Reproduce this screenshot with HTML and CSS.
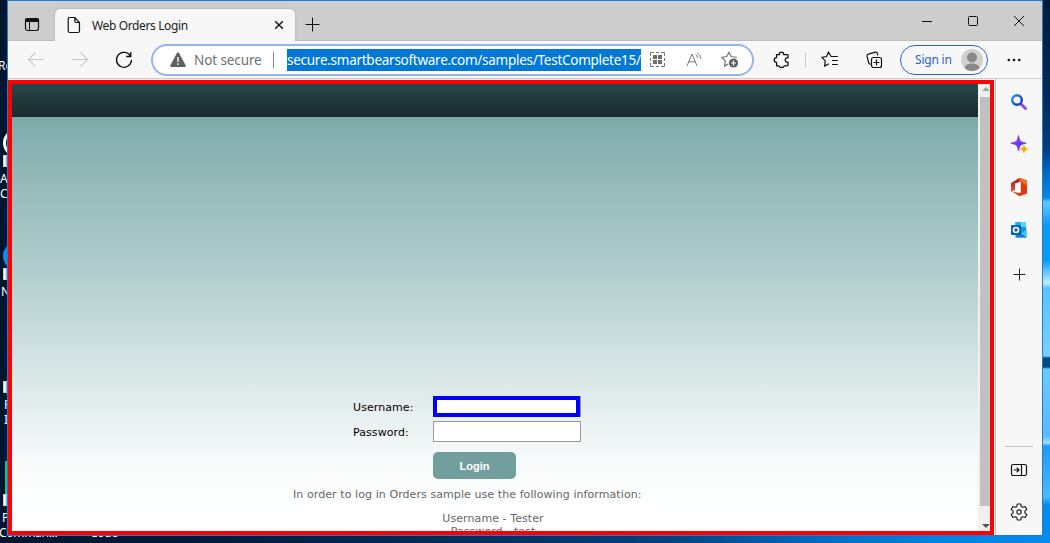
FILE: index.html
```
<!DOCTYPE html>
<html lang="en">
<head>
<meta charset="utf-8">
<title>Web Orders Login</title>
<link rel="stylesheet" href="styles.css">
</head>
<body>
<div class="desktop">
  <span class="wall-right"></span>
  <span class="icon-label l1">Re</span>
  <span class="disc white"></span><span class="shortcut s1"></span>
  <span class="icon-label l2">A<br>C</span>
  <span class="disc blue"></span><span class="shortcut s2"></span>
  <span class="icon-label l3">N</span>
  <span class="shortcut s3"></span>
  <span class="icon-label l4">P<br>I</span>
  <span class="tile"></span><span class="shortcut s4"></span>
  <span class="icon-label l5">P</span>
  <span class="icon-label l6">Comman...</span>
  <span class="icon-label l7">Code</span>

  <div class="window">
    <header class="titlebar">
      <div class="workspace"><svg width="16" height="16" viewBox="0 0 16 16"><rect x="1.5" y="2.5" width="13" height="12" rx="2.2" fill="none" stroke="#111" stroke-width="1.2"/><path d="M1 6V4.2Q1 2 3.200 2h9.600Q15 2 15 4.200V6z" fill="#111"/><path d="M5.500 6v9" stroke="#111"/></svg></div>
      <div class="tab">
        <svg width="14" height="18" viewBox="0 0 14 18" fill="none" stroke="#111" stroke-width="1.2"><path d="M2.800 1.500h5L12.500 6.500v8.200q0 1.800-1.800 1.800H2.800Q1.200 16.500 1.200 14.700V3.300Q1.200 1.500 2.800 1.500zM7.800 1.500V5q0 1.500 1.500 1.500h3.200"/></svg>
        <span class="tab-title">Web Orders Login</span>
        <svg class="tab-close" width="10" height="10" viewBox="0 0 10 10"><path d="M1.200 1.200l7.600 7.600M8.800 1.200L1.200 8.800" stroke="#111" stroke-width="1.400"/></svg>
      </div>
      <svg class="new-tab" width="15" height="15" viewBox="0 0 15 15"><path d="M7.500 .5v14M.5 7.500h14" stroke="#111"/></svg>
      <div class="controls">
        <svg width="12" height="12" viewBox="0 0 12 12"><path d="M1 7.500h10" stroke="#111"/></svg>
        <svg width="12" height="12" viewBox="0 0 12 12"><rect x="1.500" y="2.500" width="9" height="9" rx="1" fill="none" stroke="#111"/></svg>
        <svg width="12" height="12" viewBox="0 0 12 12"><path d="M1 2l10 10M11 2L1 12" stroke="#111"/></svg>
      </div>
    </header>

    <div class="toolbar">
      <div class="nav">
        <svg width="18" height="18" viewBox="0 0 18 18" fill="none" stroke="#c9c9c9" stroke-width="1.100"><path d="M17 8.500H1.500M8.500 1.500l-7 7 7 7"/></svg>
        <svg width="18" height="18" viewBox="0 0 18 18" fill="none" stroke="#c9c9c9" stroke-width="1.100"><path d="M1 8.500h15.500M9.500 1.500l7 7-7 7"/></svg>
        <svg width="18" height="18" viewBox="0 0 18 18" fill="none" stroke="#111" stroke-width="1.300"><path d="M15.600 5.200A7.500 7.500 0 1 0 16.500 9M15.800 1v4.500h-4.600"/></svg>
      </div>
      <div class="address">
        <svg class="warn" width="18" height="16" viewBox="0 0 18 16"><path d="M7.800 1.200q1.200-1.800 2.400 0l6.400 12q.7 1.800-1 1.800H2.400q-1.700 0-1-1.800z" fill="#606060"/><path d="M9 5v5M9 11.300v1.700" stroke="#eee" stroke-width="1.500"/></svg>
        <span class="insecure">Not secure</span>
        <span class="divider"></span>
        <span class="url">secure.smartbearsoftware.com/samples/TestComplete15/</span>
        <svg class="qr" width="15" height="15" viewBox="0 0 15 15"><path d="M.5 4V.5H4M11 .5h3.500V4M14.500 11v3.500H11M4 14.500H.5V11M6 .5h3M6 14.500h3M.5 6v3M14.500 6v3" stroke="#777" fill="none"/><path d="M3 3h4v4H3zM8 3h4v4H8zM3 8h4v4H3zM8 8h4v4H8z" fill="#6d6d6d"/></svg>
        <svg class="read" width="16" height="15" viewBox="0 0 16 15" fill="none" stroke="#777"><path d="M1 14L6 2l5 12M2.800 9.800h6.400M9.500 2.500q2 1.200 2 3.500M11 .700q3.500 1.800 3.800 6.300"/></svg>
        <svg class="fav" width="18" height="17" viewBox="0 0 18 17"><path d="M8 1.200l2.100 4.300 5.100.800-3.600 3.600.8 5L8 12.600l-4.600 2.500.9-5.100L.8 6.300l5-.8z" fill="none" stroke="#777" stroke-width="1.200" stroke-linejoin="round"/><circle cx="12.500" cy="12" r="5.500" fill="#fff"/><circle cx="12.500" cy="12" r="4.600" fill="#606060"/><path d="M12.500 9.500v5M10 12h5" stroke="#fff" stroke-width="1.200"/></svg>
      </div>
      <svg class="ext" width="17" height="18" viewBox="0 0 17 18"><path d="M3.600 3.600H6.200Q6.300 1.200 8.500 1.200t2.300 2.400h3.400q.8 0 .8.800v2.400h-1.100q-1.800.2-1.800 2.200t1.800 2.200H15v2.800q0 .8-.8.800h-3.100q-.4 1.700-2.500 1.700t-2.500-1.700H3.600v-3.400Q1.200 11.200 1.200 9t2.400-2.300z" fill="none" stroke="#111" stroke-width="1.300" stroke-linejoin="round"/></svg>
      <span class="bar"></span>
      <svg class="favs" width="18" height="17" viewBox="0 0 18 17" fill="none" stroke="#111" stroke-width="1.200" stroke-linejoin="round"><path d="M10 5.500L7.500 1 5.600 5.500.800 6.300l3.500 3.600-.8 5.200 4.300-2.300M10 5.500h6.800M11 9.500h5.800M11 13.500h5.800"/></svg>
      <svg class="coll" width="18" height="18" viewBox="0 0 18 18" fill="none" stroke="#111" stroke-width="1.200"><path d="M4.500 13.300Q3 13 2.600 11.500L1 5.200Q.7 3.600 2.300 3.200L9.300 1.200q1.600-.2 2 1.200l.5 2"/><rect x="5.500" y="6.500" width="10" height="10" rx="2"/><path d="M10.500 8.600v5.800M7.600 11.500h5.800"/></svg>
      <div class="signin"><span>Sign in</span><svg width="22" height="22" viewBox="0 0 22 22"><circle cx="11" cy="11" r="11" fill="#d2d0ce"/><circle cx="11" cy="8.500" r="5" fill="#8a8784"/><path d="M3.500 18.800q1.500-4.200 7.500-4.200t7.500 4.200Q15.500 22 11 22t-7.500-3.200z" fill="#8a8784"/></svg></div>
      <svg class="more" width="14" height="4" viewBox="0 0 14 4" fill="#111"><circle cx="1.800" cy="2" r="1.300"/><circle cx="7" cy="2" r="1.300"/><circle cx="12.200" cy="2" r="1.300"/></svg>
    </div>

    <div class="body">
      <main class="frame">
        <div class="page">
          <div class="banner"></div>
          <form class="login">
            <label class="row"><span>Username:</span><span class="field active"></span></label>
            <label class="row"><span>Password:</span><span class="field"></span></label>
            <button type="button">Login</button>
            <p class="info">In order to log in Orders sample use the following information:</p>
            <p class="creds">Username - Tester<br>Password - test</p>
          </form>
        </div>
        <div class="scroll"><i class="up"></i><i class="thumb"></i><i class="down"></i></div>
      </main>
      <aside class="side">
        <svg width="18" height="18" viewBox="0 0 18 18"><defs><linearGradient id="a" x2="1" y2="1"><stop stop-color="#2a9be8"/><stop offset=".7" stop-color="#1545c4"/></linearGradient></defs><path d="M10.500 10.500l5 5" stroke="#9747e8" stroke-width="3" stroke-linecap="round"/><circle cx="7" cy="7" r="4.800" fill="#f7f7f7" stroke="url(#a)" stroke-width="2.400"/></svg>
        <svg width="18" height="18" viewBox="0 0 18 18"><defs><linearGradient id="b" x2="1" y2="1"><stop stop-color="#a04cf5"/><stop offset="1" stop-color="#4a24dc"/></linearGradient></defs><path d="M8.500.5q1 4.700 2 5.700t5.700 2q-4.700 1-5.700 2t-2 5.700q-1-4.700-2-5.700t-5.700-2q4.700-1 5.700-2t2-5.700z" fill="url(#b)" stroke="#7a3bea" stroke-width=".8"/><path d="M14 10q.7 3.300 3.800 4-3.100.700-3.800 4-.7-3.300-3.800-4 3.100-.7 3.800-4z" fill="#f5a800" stroke="#f5a800" stroke-width=".5"/></svg>
        <svg width="18" height="20" viewBox="0 0 18 20"><defs><linearGradient id="c" x2="0" y2="1"><stop stop-color="#a51916"/><stop offset="1" stop-color="#ef5a36"/></linearGradient></defs><path d="M1 6L9.500.8v4.500L5 7v6l-4 2z" fill="url(#c)"/><path d="M9.500.8L17 3.500v13l-7.500 2.800-6.800-4.300 6.800.7z" fill="#df3912"/><path d="M5 6.800l5.800-2v11L4.200 15 5 13z" fill="#fff"/><path d="M9.500.8L17 3.500v5l-6-4z" fill="#f16b2c"/></svg>
        <svg width="18" height="18" viewBox="0 0 18 18"><path d="M5.500 1H16v15H5.500z" fill="#1490df"/><path d="M11 1h5v5h-5z" fill="#50d9ff"/><path d="M5.500 1H11v5H5.500z" fill="#28a8ea"/><path d="M16.800 8v8.500H6z" fill="#40c4f5"/><path d="M11 12.500l5.800 4H5z" fill="#1c78c8"/><rect x="1" y="4" width="10" height="10" rx="1" fill="#0864b1"/><circle cx="6" cy="9" r="2.500" fill="none" stroke="#fff" stroke-width="1.600"/></svg>
        <svg class="plus" width="13" height="13" viewBox="0 0 13 13"><path d="M6.500.5v12M.5 6.500h12" stroke="#222"/></svg>
        <span class="side-rule"></span>
        <svg class="panel" width="18" height="14" viewBox="0 0 18 14" fill="none" stroke="#111" stroke-width="1.200"><rect x="1.500" y="1.500" width="15" height="11" rx="1.800"/><path d="M11.500 1.500v11M3.800 7h5M6.700 4.800L9 7 6.700 9.200"/></svg>
        <svg class="gear" width="18" height="18" viewBox="0 0 18 18" fill="none" stroke="#222" stroke-width="1.200" stroke-linejoin="round"><path d="M7.300 1h3.400l.5 2.400 1.500.9 2.400-.8 1.700 2.900-1.900 1.700v1.800l1.900 1.700-1.700 2.900-2.400-.8-1.500.9-.5 2.400H7.300l-.5-2.400-1.500-.9-2.400.8-1.700-2.900 1.900-1.700V8.100L1.200 6.400l1.700-2.900 2.400.8 1.500-.9z"/><circle cx="9" cy="9" r="2.200"/></svg>
      </aside>
    </div>
  </div>
</div>
</body>
</html>
```
FILE: styles.css
```
* { box-sizing: border-box; }
body { margin: 0; overflow: hidden; font-family: "Noto Sans", "Open Sans", sans-serif; }
svg { display: block; flex: none; }
.desktop { position: relative; width: 1050px; height: 543px; padding: 0 7px 7px; overflow: hidden; background: linear-gradient(90deg, #001530, #001a3c 20%, #003468 52%, #00427f 64%, #0067bd 77%, #0083e2 90%, #078bec); }
.window { position: relative; display: flex; flex-direction: column; height: 536px; border: 1px solid #1a7fd4; background: #f7f7f7; }

/* desktop wallpaper and icons */
.wall-right { position: absolute; left: 1043px; top: 0; width: 7px; height: 543px; background: linear-gradient(#001a36 0, #00294f 90px, #003d7c 150px, #0065bb 170px, #0589e6 198px, #63c9ff 202px, #1398ef 225px, #089bf5 260px, #c3edff 283px, #59c3ff 288px, #7bcfff 356px, #004980 358px, #004980 367px, #6cc8ff 369px, #57bdfb 436px, #a4ddff 443px, #1b9bf2 446px, #4fb9fa 497px, #0589e8 505px, #078bec); }
.icon-label { position: absolute; color: #fff; font-size: 12px; line-height: 15px; white-space: nowrap; }
.l1 { left: -2px; top: 58px; }
.l2 { left: 0; top: 171px; }
.l3 { left: 1px; top: 284px; }
.l4 { left: 4px; top: 397px; }
.l5 { left: 2px; top: 510px; }
.l6 { left: -1px; top: 525px; letter-spacing: -.3px; }
.l7 { left: 90px; top: 525px; letter-spacing: -.3px; }
.disc { position: absolute; left: 3px; width: 28px; height: 28px; border-radius: 50%; }
.white { top: 129px; border: 3px solid #fff; }
.blue { top: 242px; background: #168ae0; }
.tile { position: absolute; left: 5px; top: 461px; width: 12px; height: 34px; background: #28b879; }
.shortcut { position: absolute; left: 3px; width: 11px; height: 12px; border: 1px solid #ccc; background: linear-gradient(90deg, #fff 1px, #2864a8 4px); }
.s1 { top: 155px; }
.s2 { top: 268px; }
.s3 { top: 381px; }
.s4 { top: 494px; }

/* tab strip */
.titlebar { display: flex; flex: none; height: 40px; border-bottom: 1px solid #bdbdbd; background: #cdcdcd; }
.workspace { width: 47px; padding: 15px 0 0 16px; }
.tab { display: flex; align-items: center; width: 240px; height: 32px; margin-top: 8px; padding: 0 11px 0 12px; border-radius: 5px 5px 0 0; background: #f7f7f7; box-shadow: 0 0 2px #999; clip-path: inset(-2px -2px 0); }
.tab-title { margin-left: 11px; width: 97px; font-size: 12px; letter-spacing: -.37px; white-space: nowrap; color: #222; }
.tab-close { margin-left: auto; }
.new-tab { margin: 16px 0 0 10px; }
.controls { display: flex; gap: 34px; margin: 13px 17px 0 auto; }

/* toolbar */
.toolbar { display: flex; align-items: center; flex: none; height: 38px; padding-left: 19px; border-bottom: 1px solid #ccc; }
.nav { display: flex; gap: 26px; width: 124px; }
.address { display: flex; align-items: center; width: 603px; height: 32px; padding-left: 16px; border: 2px solid #94b5ee; border-radius: 16px; background: #fff; }
.insecure { width: 71px; margin-left: 7px; font-size: 13.5px; letter-spacing: -.1px; color: #707070; white-space: nowrap; }
.divider { width: 1px; height: 16px; margin-left: 8px; background: #888; }
.url { width: 354px; height: 22px; margin-left: 13px; background: #0078d7; color: #fff; font-size: 13.5px; letter-spacing: -.265px; line-height: 22px; white-space: nowrap; }
.qr { margin-left: 9px; }
.read { margin-left: 21px; }
.fav { margin-left: 19px; }
.ext { margin-left: 19px; }
.bar { width: 1px; height: 16px; margin-left: 15px; background: #ccc; }
.favs { margin-left: 15px; }
.coll { margin-left: 27px; }
.signin { display: flex; align-items: center; justify-content: space-between; width: 88px; height: 30px; margin-left: 16px; padding: 0 4px 0 14px; border: 1px solid #2c63bf; border-radius: 15px; color: #2c63bf; font-size: 12px; letter-spacing: -.2px; white-space: nowrap; }
.more { margin-left: 19px; }

/* content area */
.body { display: flex; flex: 1; min-height: 0; }
.frame { display: flex; width: 986px; border: 4px solid #f00; margin-top: 1px; }
.page { width: 966px; overflow: hidden; background: linear-gradient(#7faaaa 33px, #b5cfcf 195px, #d9e6e6 290px, #f7fafa 375px, #fff 430px); }
.banner { height: 33px; background: linear-gradient(#2b474a, #192a2d); }
.login { margin-top: 279px; padding-left: 281px; font: 11px/13px "DejaVu Sans", sans-serif; letter-spacing: .08px; color: #000; }
.row { display: flex; align-items: center; height: 21px; margin-bottom: 4px; padding-left: 60px; }
.row > span:first-child { width: 80px; padding-top: 2px; }
.field { width: 148px; height: 21px; border: 1px solid #999; background: #fff; }
.active { width: 147px; border: 4px solid #00f; box-shadow: 1px 0 #999; }
.login button { display: block; width: 83px; height: 27px; margin: 10px 0 0 140px; padding: 0; border: 0; border-radius: 5px; background: #739e9e; color: #fff; font: bold 11px "Liberation Sans", sans-serif; }
.info, .creds { margin: 0; color: #666; white-space: nowrap; }
.info { margin-top: 9px; }
.creds { width: 400px; margin-top: 11px; text-align: center; }
.scroll { display: flex; flex-direction: column; width: 12px; padding-left: 2px; background: #f0f0f0; }
.up, .down { width: 0; height: 0; margin-left: 2px; border: 4px solid transparent; }
.up { border-bottom-color: #a3a3a3; border-top: 0; margin-top: 3px; }
.thumb { flex: 1; margin: 6px 0 18px; background: #c1c1c1; }
.down { border-top-color: #505050; border-bottom: 0; margin-bottom: 3px; }
.side { display: flex; flex-direction: column; align-items: center; width: 47px; margin-left: 1px; padding-top: 14px; gap: 24px; border-left: 1px solid #c4c4c4; }
.plus { margin-top: 5px; }
.side-rule { width: 28px; height: 1px; margin: auto 0 -8px; background: #c0c0c0; }
.panel { margin-bottom: 2px; }
.gear { margin-bottom: 14px; }
```
